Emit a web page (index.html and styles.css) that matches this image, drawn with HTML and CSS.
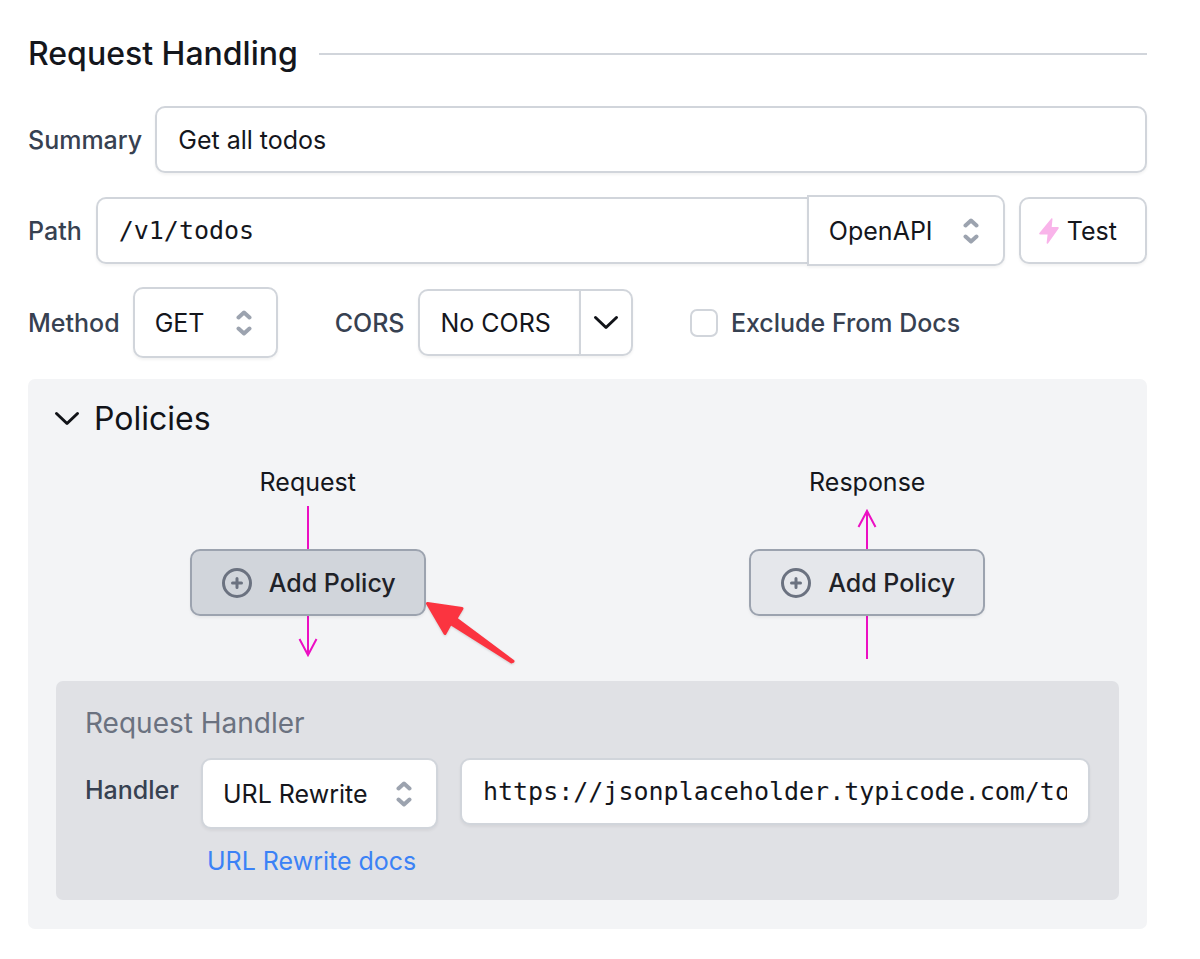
FILE: index.html
```html
<!DOCTYPE html>
<html lang="en">
<head>
<meta charset="utf-8">
<title>Request Handling</title>
<link rel="stylesheet" href="styles.css">
</head>
<body>
<main class="page">
  <header class="section-head">
    <h1 class="title">Request Handling</h1>
    <span class="rule"></span>
  </header>

  <div class="row row-summary">
    <label class="label" for="summary">Summary</label>
    <input class="control field" id="summary" type="text" value="Get all todos">
  </div>

  <div class="row row-path">
    <label class="label" for="path">Path</label>
    <div class="joined">
      <input class="control field mono joined-left" id="path" type="text" value="/v1/todos">
      <div class="select-wrap select-type">
        <select class="control select joined-right" aria-label="Path type"><option>OpenAPI</option></select>
        <svg class="updown" viewBox="0 0 16 26"><path d="M2.500 7.500 8 2.500l5.500 5M2.500 18.500 8 23.500l5.500-5"/></svg>
      </div>
    </div>
    <button class="control test" type="button">
      <svg class="bolt" viewBox="0 0 20 26"><path d="M12.300.600c.500-.700 1.300-.400 1.200.400l-.800 8h6.100c.900 0 1.300.800.800 1.500L9 25.400c-.500.700-1.500.400-1.400-.500l1-8.300H1.200c-.900 0-1.300-.800-.800-1.500z"/></svg>
      Test
    </button>
  </div>

  <div class="row row-method">
    <label class="label" for="method">Method</label>
    <div class="select-wrap select-method">
      <select class="control select" id="method"><option>GET</option></select>
      <svg class="updown" viewBox="0 0 16 26"><path d="M2.500 7.500 8 2.500l5.500 5M2.500 18.500 8 23.500l5.500-5"/></svg>
    </div>
    <div class="cors" role="group" aria-labelledby="cors-label">
      <span class="label" id="cors-label">CORS</span>
      <div class="split">
        <button class="control split-main" type="button">No CORS</button>
        <button class="control split-toggle" type="button" aria-label="Choose CORS policy">
          <svg class="chevron" viewBox="0 0 26 16"><path d="m2.500 2.500 10.500 10 10.500-10"/></svg>
        </button>
      </div>
    </div>
    <div class="exclude">
      <input class="checkbox" id="exclude" type="checkbox">
      <label class="label" for="exclude">Exclude From Docs</label>
    </div>
  </div>

  <section class="panel">
    <button class="panel-head" type="button" aria-expanded="true">
      <svg class="chevron" viewBox="0 0 26 16"><path d="m2.500 2.500 10.500 10 10.500-10"/></svg>
      <span>Policies</span>
    </button>

    <div class="lanes">
      <div class="lane">
        <div class="lane-name">Request</div>
        <div class="flow">
          <svg class="line" viewBox="0 0 20 153"><path d="M10 0v149M1.500 133l8.500 16 8.500-16"/></svg>
          <button class="control add add-active" type="button">
            <svg class="plus" viewBox="0 0 30 30"><circle cx="15" cy="15" r="13.500"/><path d="M15 10.500v9M10.500 15h9"/></svg>
            Add Policy
          </button>
          <svg class="pointer" viewBox="0 0 92 68"><path d="M2.500 2.500 37 7.600 31 17.600 88 60.300 86.500 61 25.500 22.600 20 32.500z"/></svg>
        </div>
      </div>
      <div class="lane">
        <div class="lane-name">Response</div>
        <div class="flow">
          <svg class="line" viewBox="0 0 20 153"><path d="M10 153V5M1.500 21l8.500-16 8.500 16"/></svg>
          <button class="control add" type="button">
            <svg class="plus" viewBox="0 0 30 30"><circle cx="15" cy="15" r="13.500"/><path d="M15 10.500v9M10.500 15h9"/></svg>
            Add Policy
          </button>
        </div>
      </div>
    </div>

    <section class="handler">
      <h2 class="handler-title">Request Handler</h2>
      <div class="handler-grid">
        <label class="label handler-label" for="handler">Handler</label>
        <div class="select-wrap">
          <select class="control select" id="handler"><option>URL Rewrite</option></select>
          <svg class="updown" viewBox="0 0 16 26"><path d="M2.500 7.500 8 2.500l5.500 5M2.500 18.500 8 23.500l5.500-5"/></svg>
        </div>
        <input class="control field mono" type="text" aria-label="Rewrite URL" value="https://jsonplaceholder.typicode.com/todos">
        <a class="docs" href="#">URL Rewrite docs</a>
      </div>
    </section>
  </section>
</main>
</body>
</html>
```
FILE: styles.css
```css
* {
  box-sizing: border-box;
}

body {
  margin: 0;
  background: #fff;
  color: #14161c;
  font-family: Inter, "Liberation Sans", sans-serif;
  font-size: 25px;
  line-height: 36px;
}

.page {
  padding: 33px 53px 30px 28px;
}

.section-head {
  display: flex;
  align-items: center;
  gap: 21px;
  margin-bottom: 31px;
}

.title {
  margin: 0;
  font-size: 32px;
  font-weight: 500;
  line-height: 42px;
}

.rule {
  flex: 1;
  height: 2px;
  background: #d1d5db;
}

.row {
  display: flex;
  align-items: center;
}

.row-summary {
  gap: 13px;
  margin-bottom: 22px;
}

.row-path {
  gap: 14px;
  margin-bottom: 21px;
}

.row-method {
  gap: 13px;
  margin-bottom: 21px;
}

.label {
  color: #374151;
  font-weight: 500;
  white-space: nowrap;
}

.control {
  height: 67px;
  margin: 0;
  border: 2px solid #d1d5db;
  border-radius: 10px;
  background: #fff;
  color: #14161c;
  font: inherit;
  box-shadow: 0 2px 3px rgba(0, 0, 0, 0.05);
}

.field {
  flex: 1;
  min-width: 0;
  width: 100%;
  padding: 0 21px;
}

.mono {
  font-family: "DejaVu Sans Mono", monospace;
}

.joined {
  display: flex;
  flex: 1;
  align-items: center;
  min-width: 0;
}

.joined-left {
  border-right: 0;
  border-radius: 10px 0 0 10px;
}

.select-wrap {
  display: grid;
  align-items: center;
}

.select-wrap > * {
  grid-area: 1 / 1;
}

.select {
  appearance: none;
  width: 100%;
  height: 71px;
  padding: 0 60px 0 20px;
}

.joined-right {
  border-radius: 0 10px 10px 0;
}

.select-type {
  width: 198px;
}

.select-method {
  width: 145px;
}

.updown {
  justify-self: end;
  width: 16px;
  height: 26px;
  margin-right: 26px;
  fill: none;
  stroke: #9ca3af;
  stroke-width: 4;
  stroke-linecap: round;
  stroke-linejoin: round;
  pointer-events: none;
}

.test {
  display: flex;
  align-items: center;
  gap: 8px;
  padding: 0 28px 0 18px;
}

.bolt {
  width: 20px;
  height: 26px;
  fill: #f9b4ea;
}

.cors {
  display: flex;
  align-items: center;
  gap: 13px;
  margin-left: 44px;
}

.split {
  display: flex;
}

.split-main {
  padding: 0 28px 0 21px;
  border-right: 0;
  border-radius: 10px 0 0 10px;
}

.split-toggle {
  display: flex;
  align-items: center;
  padding: 0 12px;
  border-radius: 0 10px 10px 0;
}

.chevron {
  width: 26px;
  height: 16px;
  fill: none;
  stroke: #111318;
  stroke-width: 3;
  stroke-linecap: round;
  stroke-linejoin: round;
}

.exclude {
  display: flex;
  align-items: center;
  gap: 13px;
  margin-left: 44px;
}

.checkbox {
  appearance: none;
  width: 28px;
  height: 28px;
  margin: 0;
  border: 2px solid #d1d5db;
  border-radius: 7px;
  background: #fff;
}

.panel {
  padding-bottom: 29px;
  border-radius: 7px;
  background: #f3f4f6;
}

.panel-head {
  display: flex;
  align-items: center;
  gap: 14px;
  margin: 0;
  padding: 18px 26px 20px;
  border: 0;
  background: none;
  color: #111318;
  font: inherit;
  font-size: 32px;
  line-height: 44px;
}

.lanes {
  display: grid;
  grid-template-columns: 1fr 1fr;
  margin-bottom: 22px;
}

.lane {
  display: flex;
  flex-direction: column;
  align-items: center;
}

.lane-name {
  padding: 3px 0 6px;
}

.flow {
  position: relative;
  display: grid;
  place-items: center;
}

.line,
.add {
  grid-area: 1 / 1;
}

.line {
  width: 20px;
  height: 153px;
  fill: none;
  stroke: #ec0fc3;
  stroke-width: 2;
}

.add {
  display: flex;
  align-items: center;
  gap: 17px;
  z-index: 1;
  padding: 0 28px 0 30px;
  border-color: #9ca3af;
  background: #e5e7eb;
  color: #1f2228;
  font-weight: 500;
  white-space: nowrap;
}

.add-active {
  background: #d1d5db;
}

.plus {
  width: 30px;
  height: 30px;
  fill: none;
  stroke: #6b7280;
  stroke-width: 3;
  stroke-linecap: round;
}

.pointer {
  position: absolute;
  top: 95px;
  left: calc(100% - 1px);
  z-index: 2;
  width: 92px;
  height: 68px;
  fill: #fb3440;
  stroke: #fb3440;
  stroke-width: 3;
  stroke-linejoin: round;
  filter: drop-shadow(0 1px 1px rgba(0, 0, 0, 0.15));
}

.handler {
  margin: 0 28px;
  padding: 24px 29px 21px;
  border-radius: 7px;
  background: #e0e1e5;
}

.handler-title {
  margin: 0 0 17px;
  color: #6b7280;
  font-size: 28px;
  font-weight: 400;
  line-height: 36px;
}

.handler-grid {
  display: grid;
  grid-template-columns: auto 237px 1fr;
  column-gap: 22px;
  row-gap: 14px;
  align-items: start;
}

.handler-label {
  padding-top: 14px;
}

.docs {
  grid-column: 2 / 4;
  justify-self: start;
  padding-left: 6px;
  color: #3b82f6;
  text-decoration: none;
}
```
